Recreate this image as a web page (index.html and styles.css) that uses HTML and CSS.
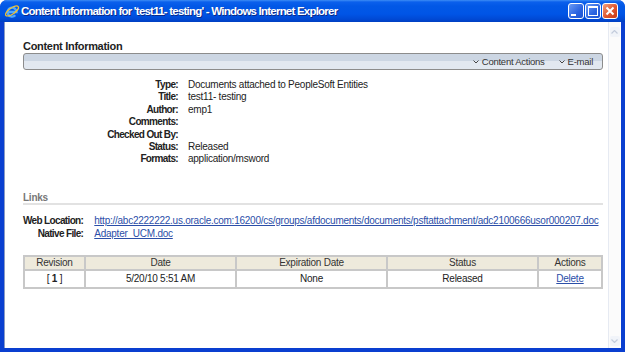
FILE: index.html
```html
<!DOCTYPE html>
<html lang="en">
<head>
  <meta charset="UTF-8">
  <title>Content Information</title>
  <link rel="stylesheet" href="styles.css">
</head>
<body>
  <div class="window">
    <div class="titlebar">
      <svg class="ie-icon" width="16" height="16" viewBox="0 0 16 16">
        <path d="M3.5 9h9a4.5 4.5 0 1 0 -1.2 3.2" fill="none" stroke="#4fa8ff" stroke-width="2.4"/>
        <ellipse cx="8" cy="8" rx="7.6" ry="3" fill="none" stroke="#f3c230" stroke-width="1.2" transform="rotate(-35 8 8)"/>
      </svg>
      <span class="title-text">Content Information for 'test11- testing' - Windows Internet Explorer</span>
      <div class="title-buttons">
        <span class="tbtn"><span class="min-bar"></span></span>
        <span class="tbtn"><span class="max-box"></span></span>
        <span class="tbtn close">
          <svg width="10" height="10" viewBox="0 0 10 10"><path d="M1.5 1.5l7 7M8.5 1.5l-7 7" stroke="#fff" stroke-width="2"/></svg>
        </span>
      </div>
    </div>

    <div class="client">
      <div class="page">
        <h2 class="page-title">Content Information</h2>
        <div class="toolbar">
          <span class="tool-item">
            <svg class="chev" width="6" height="4" viewBox="0 0 6 4"><path d="M0.5 0.5l2.5 2.5 2.5-2.5" fill="none" stroke="#444" stroke-width="1"/></svg>
            Content Actions
          </span>
          <span class="tool-item">
            <svg class="chev" width="6" height="4" viewBox="0 0 6 4"><path d="M0.5 0.5l2.5 2.5 2.5-2.5" fill="none" stroke="#444" stroke-width="1"/></svg>
            E-mail
          </span>
        </div>

        <div class="info">
          <div class="lbl">Type:</div><div class="val">Documents attached to PeopleSoft Entities</div>
          <div class="lbl">Title:</div><div class="val">test11- testing</div>
          <div class="lbl">Author:</div><div class="val">emp1</div>
          <div class="lbl">Comments:</div><div class="val"></div>
          <div class="lbl">Checked Out By:</div><div class="val"></div>
          <div class="lbl">Status:</div><div class="val">Released</div>
          <div class="lbl">Formats:</div><div class="val">application/msword</div>
        </div>

        <div class="section-head">Links</div>
        <div class="links">
          <div class="lbl">Web Location:</div>
          <div class="val"><a href="#">http://abc2222222.us.oracle.com:16200/cs/groups/afdocuments/documents/psftattachment/adc2100666usor000207.doc</a></div>
          <div class="lbl">Native File:</div>
          <div class="val"><a href="#">Adapter_UCM.doc</a></div>
        </div>

        <table class="revisions">
          <thead>
            <tr>
              <th class="c-rev">Revision</th>
              <th class="c-date">Date</th>
              <th class="c-date">Expiration Date</th>
              <th class="c-date">Status</th>
              <th>Actions</th>
            </tr>
          </thead>
          <tbody>
            <tr>
              <td>[ <b>1</b> ]</td>
              <td>5/20/10 5:51 AM</td>
              <td>None</td>
              <td>Released</td>
              <td><a href="#">Delete</a></td>
            </tr>
          </tbody>
        </table>
      </div>

      <div class="scrollbar">
        <span class="sarrow">
          <svg width="7" height="4" viewBox="0 0 7 4"><path d="M0.5 3.5l3-3 3 3" fill="none" stroke="#c3ccdc" stroke-width="1.2"/></svg>
        </span>
        <span class="sarrow">
          <svg width="7" height="4" viewBox="0 0 7 4"><path d="M0.5 0.5l3 3 3-3" fill="none" stroke="#c3ccdc" stroke-width="1.2"/></svg>
        </span>
      </div>
    </div>
  </div>
</body>
</html>
```

FILE: styles.css
```css
body {
  margin: 0;
  font-family: "Liberation Sans", Arial, sans-serif;
  font-size: 10px;
  letter-spacing: -0.25px;
  color: #222;
  background: #fff;
}

.window {
  width: 625px;
  height: 352px;
  box-sizing: border-box;
  display: flex;
  flex-direction: column;
  background: #0a3fd0;
  padding: 0 4px 4px 4px;
  border-radius: 7px 7px 0 0;
  overflow: hidden;
}

.titlebar {
  height: 22px;
  flex: none;
  margin: 0 -4px;
  display: flex;
  align-items: center;
  padding: 0 4px 0 4px;
  background: linear-gradient(#3d8df5 0, #0b60ec 2px, #0258e6 6px, #0055e6 14px, #0049d5 19px, #0040c2 22px);
}

.ie-icon {
  flex: none;
  margin-right: 1px;
}

.title-text {
  flex: 1;
  color: #fff;
  font-weight: bold;
  font-size: 11.5px;
  letter-spacing: -0.78px;
  text-shadow: 1px 1px 0 #0a2a8a;
  white-space: nowrap;
}

.title-buttons {
  display: flex;
  gap: 1px;
  margin-right: 3px;
}

.tbtn {
  width: 14px;
  height: 14px;
  border: 1px solid #fff;
  border-radius: 3px;
  background: linear-gradient(135deg, #6c9cf5, #2a63e0 60%, #1f55d2);
  display: flex;
  align-items: center;
  justify-content: center;
}

.tbtn.close {
  background: linear-gradient(135deg, #f0a080, #e0562e 55%, #c63a18);
}

.min-bar {
  width: 5px;
  height: 2px;
  background: #fff;
  margin: 7px 5px 0 0;
}

.max-box {
  width: 8px;
  height: 7px;
  border: 1px solid #fff;
  border-top-width: 2px;
}

.client {
  flex: 1;
  display: flex;
  min-height: 0;
  background: #fff;
  border-left: 1px solid #8a9bc4;
}

.page {
  flex: 1;
  min-width: 0;
  overflow: hidden;
  padding: 17px 5px 0 18px;
}

.page-title {
  margin: 0;
  font-size: 11px;
  font-weight: bold;
  color: #222;
  line-height: 14px;
  letter-spacing: -0.3px;
}

.toolbar {
  margin-top: 0;
  height: 15px;
  border: 1px solid #8c8c8c;
  border-radius: 3px;
  background: linear-gradient(#ccd6e3 0, #ccd6e3 50%, #e2e8f0 50%, #e2e8f0 100%);
  display: flex;
  justify-content: flex-end;
  align-items: center;
  gap: 14px;
  padding-right: 9px;
}

.tool-item {
  font-size: 9.5px;
  color: #333;
  display: flex;
  align-items: center;
}

.chev {
  margin-right: 3px;
}

.info {
  display: grid;
  grid-template-columns: 155px 1fr;
  column-gap: 10px;
  margin-top: 9px;
  line-height: 12.4px;
}

.lbl {
  text-align: right;
  font-weight: bold;
  color: #222;
  white-space: nowrap;
  letter-spacing: -0.65px;
}

.val {
  color: #222;
  min-height: 12.4px;
  white-space: nowrap;
}

.section-head {
  margin-top: 26px;
  font-weight: bold;
  color: #777;
  padding-bottom: 0;
  border-bottom: 2px solid #e2e2e2;
}

.links {
  display: grid;
  grid-template-columns: max-content 1fr;
  column-gap: 11px;
  margin-top: 9px;
  line-height: 13px;
}

.links a, .revisions a {
  color: #2b4ea8;
}

.revisions {
  width: 100%;
  margin-top: 15px;
  border-collapse: collapse;
  border: 1px solid #a3a3a3;
  table-layout: fixed;
}

.revisions th, .revisions td {
  border: 2px solid #c8c8c8;
  text-align: center;
  padding: 0;
}

.revisions th {
  background: #eeeadc;
  font-weight: normal;
  color: #333;
  height: 12px;
  line-height: 12px;
}

.revisions td {
  height: 16px;
  color: #222;
}

.c-rev { width: 59px; }
.c-date { width: 149px; }

.scrollbar {
  flex: none;
  width: 11px;
  margin-right: 1px;
  background: #fbfbfb;
  border-left: 1px solid #e6eaf2;
  display: flex;
  flex-direction: column;
  justify-content: space-between;
  align-items: center;
  padding: 5px 0 2px;
}

.sarrow {
  width: 10px;
  height: 10px;
  display: flex;
  align-items: center;
  justify-content: center;
  background: #f1f4f9;
  border-radius: 2px;
}
```
